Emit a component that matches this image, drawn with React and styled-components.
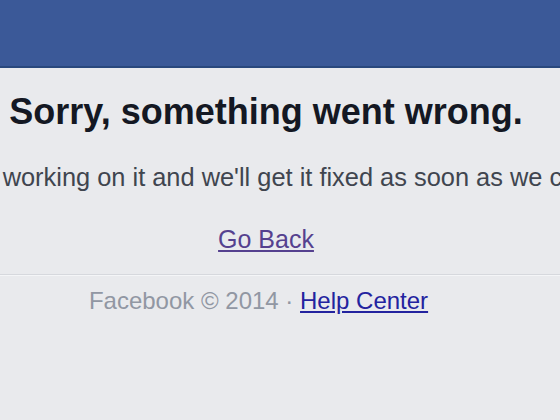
import styled, { createGlobalStyle } from "styled-components";

const Global = createGlobalStyle`
	html, body {
		margin: 0;
		padding: 0;
		background: #e9eaed;
		font-family: "Liberation Sans", Arial, sans-serif;
		overflow: hidden;
	}
`;

const TopBar = styled.header`
	height: 66px;
	background: #3b5998;
	border-bottom: 2px solid #29487d;
`;

const Main = styled.main`
	display: flex;
	justify-content: center;
	overflow: hidden;
`;

const Column = styled.div`
	flex: 0 0 720px;
	padding-right: ${(p) => p.$shift || 0}px;
	text-align: center;
`;

const Title = styled.h1`
	margin: 24px 0 0;
	font-size: 36px;
	line-height: 40px;
	font-weight: bold;
	color: #141823;
`;

const Message = styled.p`
	margin: 30px 0 0;
	padding-right: 4px;
	font-size: 25.4px;
	line-height: 30px;
	color: #40454f;
	white-space: nowrap;
`;

const BackLink = styled.a`
	display: inline-block;
	margin: 32px 0 20px;
	font-size: 25px;
	line-height: 30px;
	color: #55418f;
	text-decoration: underline;
`;

const Footer = styled.footer`
	border-top: 1px solid #d6d8dd;
	box-shadow: inset 0 1px 0 #f4f5f7;
	display: flex;
	justify-content: center;
	padding-top: 11px;
`;

const FooterText = styled.div`
	padding-right: 43px;
	font-size: 24px;
	line-height: 30px;
	color: #9197a3;
	white-space: nowrap;
`;

const HelpLink = styled.a`
	color: #23239f;
	text-decoration: underline;
`;

export default function App() {
	return (
		<>
			<Global />
			<TopBar />
			<Main>
				<Column $shift={28}>
					<Title>Sorry, something went wrong.</Title>
					<Message>
						We're working on it and we'll get it fixed as soon as we can.
					</Message>
					<BackLink href="#">Go Back</BackLink>
				</Column>
			</Main>
			<Footer>
				<FooterText>
					Facebook © 2014 · <HelpLink href="#">Help Center</HelpLink>
				</FooterText>
			</Footer>
		</>
	);
}
